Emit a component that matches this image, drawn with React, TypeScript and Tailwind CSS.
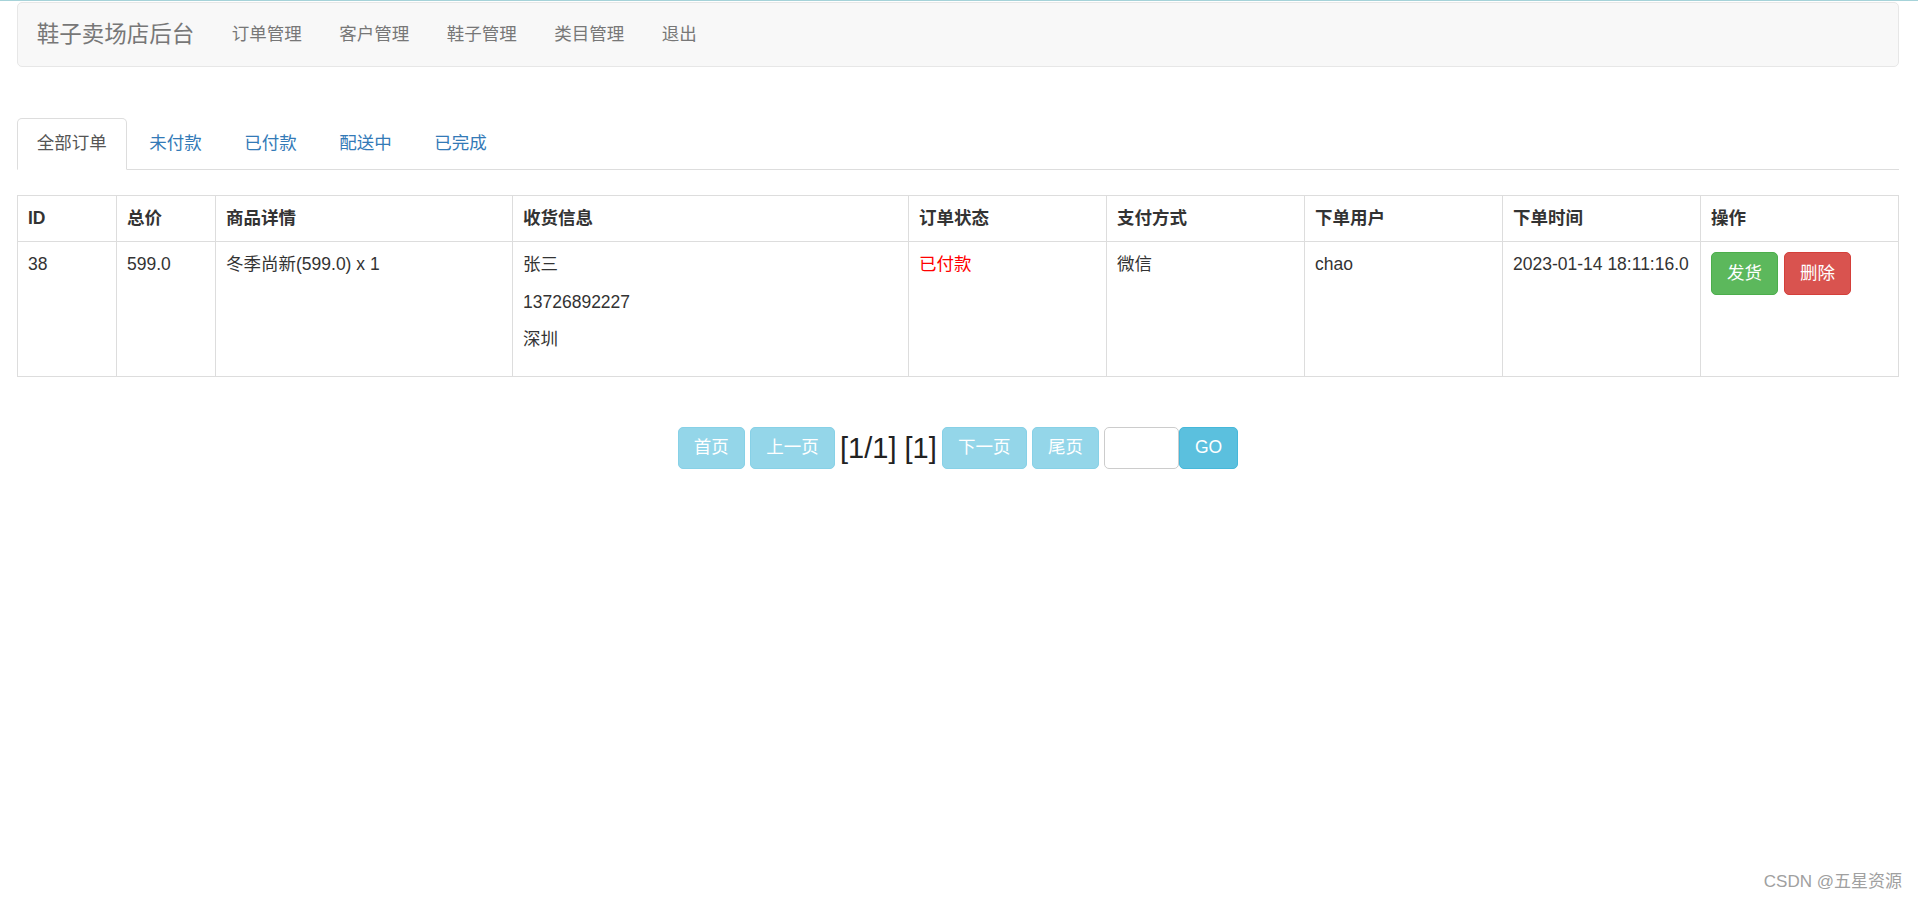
const navLinks = ["订单管理", "客户管理", "鞋子管理", "类目管理", "退出"];
const tabs = ["全部订单", "未付款", "已付款", "配送中", "已完成"];

const columns = [
  { label: "ID", width: "w-[99px]" },
  { label: "总价", width: "w-[99px]" },
  { label: "商品详情", width: "w-[297px]" },
  { label: "收货信息", width: "w-[396px]" },
  { label: "订单状态", width: "w-[198px]" },
  { label: "支付方式", width: "w-[198px]" },
  { label: "下单用户", width: "w-[198px]" },
  { label: "下单时间", width: "w-[198px]" },
  { label: "操作", width: "w-[198px]" },
];

function PageButton({ label }: { label: string }) {
  return (
    <a className="flex h-[42.5px] items-center rounded-[5px] border border-[#87d1e7] bg-[#94d6e9] px-[15.25px] text-white">
      {label}
    </a>
  );
}

export default function App() {
  return (
    <div className="relative min-h-screen bg-white font-['Liberation_Sans','Noto_Sans_CJK_SC',sans-serif] text-[17.5px] leading-[25px] text-[#333]">
      <div className="h-px bg-[#a6d3d9]" />

      <div className="ml-[17px] mr-[19px] pt-px">
        {/* navbar */}
        <nav className="flex h-[64.5px] items-start rounded-[5px] border border-[#e7e7e7] bg-[#f8f8f8]">
          <a className="px-[18.75px] py-[18.75px] text-[22.5px] leading-[25px] text-[#777]">鞋子卖场店后台</a>
          <ul className="flex">
            {navLinks.map((link) => (
              <li key={link}>
                <a className="block px-[18.75px] py-[18.75px] text-[#777]">{link}</a>
              </li>
            ))}
          </ul>
        </nav>

        {/* tabs */}
        <ul className="mt-[51px] flex border-b border-[#ddd]">
          {tabs.map((tab, i) => (
            <li key={tab} className="-mb-px mr-[3px]">
              {i === 0 ? (
                <a className="block rounded-t-[5px] border border-[#ddd] border-b-transparent bg-white px-[18.75px] py-[12.5px] text-[#555]">
                  {tab}
                </a>
              ) : (
                <a className="block rounded-t-[5px] border border-transparent px-[18.75px] py-[12.5px] text-[#337ab7]">
                  {tab}
                </a>
              )}
            </li>
          ))}
        </ul>

        {/* orders table */}
        <table className="mt-[25.5px] w-full table-fixed border-collapse border border-[#ddd]">
          <colgroup>
            {columns.map((col) => (
              <col key={col.label} className={col.width} />
            ))}
          </colgroup>
          <thead>
            <tr>
              {columns.map((col) => (
                <th key={col.label} className="border border-[#ddd] p-[10px] text-left align-bottom font-bold">
                  {col.label}
                </th>
              ))}
            </tr>
          </thead>
          <tbody>
            <tr className="align-top">
              <td className="border border-[#ddd] p-[10px]">38</td>
              <td className="border border-[#ddd] p-[10px]">599.0</td>
              <td className="border border-[#ddd] p-[10px]">冬季尚新(599.0) x 1</td>
              <td className="border border-[#ddd] p-[10px] pb-[11px]">
                <p className="mb-[12.5px]">张三</p>
                <p className="mb-[12.5px]">13726892227</p>
                <p className="mb-[12.5px]">深圳</p>
              </td>
              <td className="border border-[#ddd] p-[10px] text-[#f00]">已付款</td>
              <td className="border border-[#ddd] p-[10px]">微信</td>
              <td className="border border-[#ddd] p-[10px]">chao</td>
              <td className="border border-[#ddd] p-[10px]">2023-01-14 18:11:16.0</td>
              <td className="border border-[#ddd] p-[10px]">
                <div className="flex gap-[6px]">
                  <button className="h-[42.5px] rounded-[5px] border border-[#4cae4c] bg-[#5cb85c] px-[15px] text-white">发货</button>
                  <button className="h-[42.5px] rounded-[5px] border border-[#d43f3a] bg-[#d9534f] px-[15px] text-white">删除</button>
                </div>
              </td>
            </tr>
          </tbody>
        </table>

        {/* pagination */}
        <div className="mt-[50px] flex items-center justify-center">
          <div className="flex items-center gap-[5px]">
            <PageButton label="首页" />
            <PageButton label="上一页" />
          </div>
          <span className="ml-[5px] mr-[5px] text-[29px] leading-[42px] text-[#222]">[1/1] [1]</span>
          <div className="flex items-center gap-[5px]">
            <PageButton label="下一页" />
            <PageButton label="尾页" />
          </div>
          <input className="ml-[5px] h-[42.5px] w-[74.5px] rounded-[5px] border border-[#ccc] bg-white outline-none" />
          <button className="h-[42.5px] rounded-[5px] border border-[#46b8da] bg-[#5bc0de] px-[15.25px] text-white">GO</button>
        </div>
      </div>

      <div className="absolute bottom-[10px] right-[16px] text-[17px] leading-[19px] text-[#a0a0a0]">CSDN @五星资源</div>
    </div>
  );
}
